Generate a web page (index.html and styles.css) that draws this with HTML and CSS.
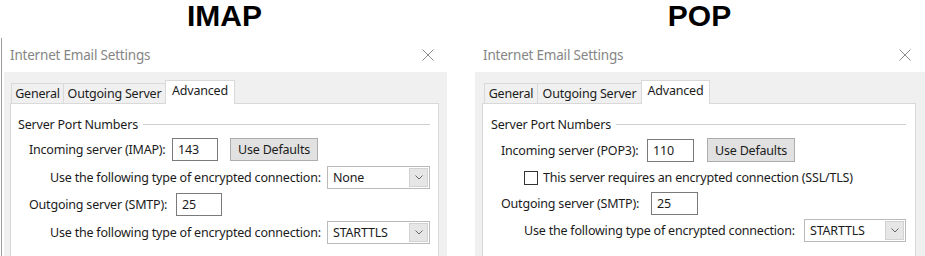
FILE: index.html
```html
<!DOCTYPE html>
<html lang="en">
<head>
    <meta charset="UTF-8">
    <meta name="viewport" content="width=device-width, initial-scale=1.0">
    <title>IMAP vs POP port settings</title>
    <link rel="stylesheet" href="styles.css">
</head>
<body>
    <div class="compare">
        <section class="col col-imap">
            <h1 class="proto">IMAP</h1>
            <div class="dialog">
                <div class="titlebar">
                    <span class="title">Internet Email Settings</span>
                    <svg class="close" width="12" height="12" viewBox="0 0 12 12"><path d="M0.5 0.5L11.5 11.5M11.5 0.5L0.5 11.5" stroke="#8c8c8c" stroke-width="1" fill="none"/></svg>
                </div>
                <div class="sheet">
                    <div class="tabs">
                        <span class="tab tab-general">General</span>
                        <span class="tab tab-outgoing">Outgoing Server</span>
                        <span class="tab tab-advanced active">Advanced</span>
                    </div>
                    <div class="panel">
                        <div class="group-head"><span>Server Port Numbers</span><span class="rule"></span></div>
                        <div class="row row-in">
                            <span class="lbl lbl-in">Incoming server (IMAP):</span>
                            <span class="field">143</span>
                            <span class="btn">Use Defaults</span>
                        </div>
                        <div class="row row-enc sub">
                            <span class="lbl lbl-enc">Use the following type of encrypted connection:</span>
                            <span class="combo">
                                <span class="combo-val">None</span>
                                <span class="combo-arrow"><svg width="8" height="5" viewBox="0 0 8 5"><polyline points="0.5,0.5 4,4 7.5,0.5" stroke="#666" fill="none"/></svg></span>
                            </span>
                        </div>
                        <div class="row row-out">
                            <span class="lbl lbl-out">Outgoing server (SMTP):</span>
                            <span class="field">25</span>
                        </div>
                        <div class="row row-enc2 sub">
                            <span class="lbl lbl-enc">Use the following type of encrypted connection:</span>
                            <span class="combo">
                                <span class="combo-val">STARTTLS</span>
                                <span class="combo-arrow"><svg width="8" height="5" viewBox="0 0 8 5"><polyline points="0.5,0.5 4,4 7.5,0.5" stroke="#666" fill="none"/></svg></span>
                            </span>
                        </div>
                    </div>
                </div>
            </div>
        </section>

        <section class="col col-pop">
            <h1 class="proto">POP</h1>
            <div class="dialog">
                <div class="titlebar">
                    <span class="title">Internet Email Settings</span>
                    <svg class="close" width="12" height="12" viewBox="0 0 12 12"><path d="M0.5 0.5L11.5 11.5M11.5 0.5L0.5 11.5" stroke="#8c8c8c" stroke-width="1" fill="none"/></svg>
                </div>
                <div class="sheet">
                    <div class="tabs">
                        <span class="tab tab-general">General</span>
                        <span class="tab tab-outgoing">Outgoing Server</span>
                        <span class="tab tab-advanced active">Advanced</span>
                    </div>
                    <div class="panel">
                        <div class="group-head"><span>Server Port Numbers</span><span class="rule"></span></div>
                        <div class="row row-in">
                            <span class="lbl lbl-in">Incoming server (POP3):</span>
                            <span class="field">110</span>
                            <span class="btn">Use Defaults</span>
                        </div>
                        <div class="row row-enc sub">
                            <span class="check"></span>
                            <span class="lbl">This server requires an encrypted connection (SSL/TLS)</span>
                        </div>
                        <div class="row row-out">
                            <span class="lbl lbl-out">Outgoing server (SMTP):</span>
                            <span class="field">25</span>
                        </div>
                        <div class="row row-enc2 sub">
                            <span class="lbl lbl-enc">Use the following type of encrypted connection:</span>
                            <span class="combo">
                                <span class="combo-val">STARTTLS</span>
                                <span class="combo-arrow"><svg width="8" height="5" viewBox="0 0 8 5"><polyline points="0.5,0.5 4,4 7.5,0.5" stroke="#666" fill="none"/></svg></span>
                            </span>
                        </div>
                    </div>
                </div>
            </div>
        </section>
    </div>
</body>
</html>
```

FILE: styles.css
```css
html, body {
    height: 256px;
    overflow: hidden;
}
body {
    margin: 0;
    background: #fff;
    font-family: "Noto Sans", "Segoe UI", sans-serif;
    font-size: 12.5px;
    letter-spacing: -0.2px;
    color: #1b1b1b;
}
.compare {
    display: flex;
    align-items: flex-start;
}
.col {
    box-sizing: border-box;
}
.col-imap {
    margin-left: 1px;
    width: 447px;
}
.col-pop {
    margin-left: 26px;
    width: 451px;
}
.proto {
    margin: 0 0 6px;
    height: 32px;
    font-family: "Liberation Sans", Arial, sans-serif;
    font-weight: bold;
    font-size: 30px;
    line-height: 32px;
    letter-spacing: 0;
    text-align: center;
    color: #000;
}
.dialog {
    box-sizing: border-box;
    height: 218px;
}
.col-imap .dialog {
    border-left: 1px solid #9c9c9c;
}

/* title bar */
.titlebar {
    height: 34px;
    display: flex;
    align-items: center;
    justify-content: space-between;
}
.col-imap .titlebar {
    padding: 0 14px 0 8px;
}
.col-pop .titlebar {
    padding: 0 14px 0 9px;
}
.title {
    color: #858585;
    font-size: 13.5px;
}
.close {
    display: block;
}

/* tab sheet */
.sheet {
    box-sizing: border-box;
    height: 184px;
    background: #f0f0f0;
    padding-top: 11px;
}
.col-imap .sheet {
    margin: 0 1px 0 2px;
    padding-left: 6px;
    padding-right: 8px;
}
.col-pop .sheet {
    margin-left: 1px;
    padding-left: 7px;
    padding-right: 9px;
}
.tabs {
    display: flex;
    align-items: flex-end;
    height: 20px;
    padding-left: 1px;
}
.col-pop .tabs {
    padding-left: 2px;
}
.tab {
    box-sizing: border-box;
    height: 20px;
    margin-right: -1px;
    border: 1px solid #d9d9d9;
    border-bottom: none;
    background: #f0f0f0;
    display: flex;
    align-items: center;
    justify-content: center;
    white-space: nowrap;
}
.tab-general { width: 53px; }
.tab-outgoing { width: 103px; }
.tab-advanced { width: 70px; }
.col-pop .tab-general { width: 54px; }
.col-pop .tab-outgoing { width: 105px; }
.col-pop .tab-advanced { width: 69px; }
.tab.active {
    height: 24px;
    margin-bottom: -1px;
    padding-bottom: 4px;
    background: #fff;
    position: relative;
    z-index: 1;
}
.panel {
    box-sizing: border-box;
    height: 153px;
    background: #fff;
    border: 1px solid #d9d9d9;
    border-bottom: none;
}

/* group box */
.group-head {
    display: flex;
    align-items: center;
    height: 18px;
    margin: 11px 8px 3px 7px;
    white-space: nowrap;
}
.col-pop .group-head {
    margin: 11px 9px 3px 8px;
}
.rule {
    flex: 1;
    margin-left: 5px;
    border-top: 1px solid #cfcfcf;
}

/* rows */
.row {
    display: flex;
    align-items: center;
    padding-left: 18px;
    white-space: nowrap;
}
.row.sub {
    padding-left: 39px;
}
.col-pop .row.sub {
    padding-left: 41px;
}
.row-in { height: 27px; }
.row-enc { height: 28px; }
.row-out { height: 27px; }
.row-enc2 { height: 28px; }
.col-pop .row-in { height: 28px; }
.col-pop .row-enc { height: 27px; }
.col-pop .row-out { height: 25px; }

.lbl {
    flex: none;
}
.lbl-in { width: 143px; }
.lbl-enc { width: 277px; }
.lbl-out { width: 147px; }
.col-pop .lbl-in { width: 146px; }
.col-pop .lbl-out { width: 150px; }
.col-pop .lbl-enc { width: 280px; }

.field {
    box-sizing: border-box;
    width: 46px;
    height: 23px;
    padding-left: 5px;
    border: 1px solid #7a7a7a;
    background: #fff;
    line-height: 21px;
}
.col-pop .field {
    width: 47px;
}
.btn {
    box-sizing: border-box;
    width: 88px;
    height: 23px;
    margin-left: 12px;
    border: 1px solid #adadad;
    background: #e1e1e1;
    display: flex;
    align-items: center;
    justify-content: center;
}
.col-pop .btn {
    margin-left: 13px;
    height: 24px;
}
.combo {
    box-sizing: border-box;
    width: 103px;
    height: 23px;
    display: flex;
    border: 1px solid #bababa;
    background: #fff;
}
.col-pop .combo {
    width: 102px;
}
.combo-val {
    flex: 1;
    padding-left: 5px;
    line-height: 21px;
}
.combo-arrow {
    box-sizing: border-box;
    width: 19px;
    margin: 1px;
    border: 1px solid #d2d2d2;
    background: #e6e6e6;
    display: flex;
    align-items: center;
    justify-content: center;
}
.check {
    box-sizing: border-box;
    width: 14px;
    height: 14px;
    margin-right: 5px;
    border: 1px solid #333;
    background: #fff;
}
```
